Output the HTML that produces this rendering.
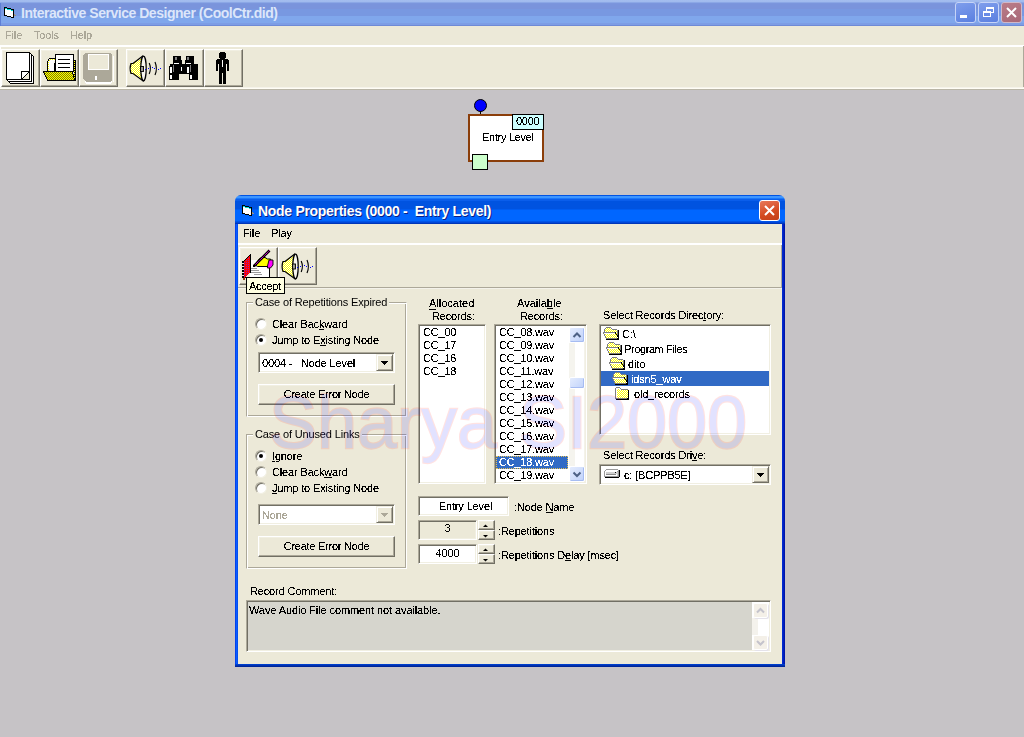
<!DOCTYPE html>
<html><head><meta charset="utf-8">
<style>
*{margin:0;padding:0;box-sizing:border-box}
html,body{width:1024px;height:737px;overflow:hidden;background:#C6C3C6;position:relative;font-family:"Liberation Sans",sans-serif}
.a{position:absolute}
.t{position:absolute;font:11px/11px "Liberation Sans",sans-serif;white-space:nowrap;letter-spacing:-0.15px;color:#000;filter:url(#thr)}
.tb{position:absolute;font:bold 13px/13px "Liberation Sans",sans-serif;white-space:nowrap}
u{text-decoration:none;border-bottom:1px solid currentColor;display:inline-block;line-height:11px;height:11px}
.sunk{position:absolute;border:1px solid;border-color:#ACA899 #FFFFFF #FFFFFF #ACA899;box-shadow:inset 1px 1px #716F64,inset -1px -1px #F1EFE2;background:#fff}
.rais{position:absolute;border:1px solid;border-color:#FFFFFF #716F64 #716F64 #FFFFFF;box-shadow:inset -1px -1px #ACA899,inset 1px 1px #F1EFE2;background:#ECE9D8}
.grp{position:absolute;border:1px solid;border-color:#ACA899 #FFFFFF #FFFFFF #ACA899;box-shadow:inset 1px 1px #FFFFFF,inset -1px -1px #ACA899}
.radio{position:absolute;width:12px;height:12px;border-radius:50%;background:#fff;border:1px solid;border-color:#ACA899 #F1EFE2 #F1EFE2 #ACA899;box-shadow:inset 1px 1px #716F64}
.radio.on::after{content:"";position:absolute;left:3px;top:3px;width:4px;height:4px;border-radius:50%;background:#000}
.cbtn{position:absolute;border:1px solid;border-color:#F1EFE2 #716F64 #716F64 #F1EFE2;box-shadow:inset 1px 1px #FFFFFF,inset -1px -1px #ACA899;background:#ECE9D8}
.ls{letter-spacing:-0.2px}
.tbtn{position:absolute;width:39px;height:38px;border:1px solid;border-color:#FFFFFF #716F64 #716F64 #FFFFFF;box-shadow:inset -1px -1px #ACA899,inset 1px 1px #F1EFE2;background:#ECE9D8}
</style></head><body>
<svg width="0" height="0" style="position:absolute"><filter id="thr" color-interpolation-filters="sRGB"><feComponentTransfer><feFuncA type="discrete" tableValues="0 0 0 0 0 0 0 0 0 0 0 0 0 0 0 0 0 0 0 0 0 0 0 0 0 0 0 0 0 0 0 0 0 0 0 0 0 0 0 0 0 0 0 1 1 1 1 1 1 1 1 1 1 1 1 1 1 1 1 1 1 1 1 1 1 1 1 1 1 1 1 1 1 1 1 1 1 1 1 1 1 1 1 1 1 1 1 1 1 1 1 1 1 1 1 1 1 1 1 1"/></feComponentTransfer></filter></svg>

<!-- main title bar -->
<div class="a" style="left:0;top:0;width:1024px;height:26px;background:linear-gradient(180deg,#A3BDEF 0,#A0BAEE 2px,#8CA8E6 2px,#8CA8E6 3px,#7D98DE 3px,#7A94DC 4px,#7A94DC 9px,#7898E1 9px,#7898E1 16px,#80A7EC 16px,#80A7EC 23px,#7D9DE5 23px,#7D9DE5 25px,#6E8AD6 25px,#6E8AD6 26px)"></div>
<div class="a" style="left:0;top:3px;width:1px;height:23px;background:#5E7FD6"></div>
<svg class="a" style="left:4px;top:7px" width="12" height="11" shape-rendering="crispEdges"><rect x="0" y="0" width="3" height="1" fill="#000"/><rect x="0" y="1" width="1" height="1" fill="#000"/><rect x="1" y="1" width="2" height="1" fill="#00E0E0"/><rect x="3" y="1" width="4" height="1" fill="#000"/><rect x="0" y="2" width="1" height="1" fill="#000"/><rect x="1" y="2" width="2" height="1" fill="#fff"/><rect x="3" y="2" width="4" height="1" fill="#00E0E0"/><rect x="7" y="2" width="3" height="1" fill="#000"/><rect x="0" y="3" width="1" height="1" fill="#000"/><rect x="1" y="3" width="6" height="1" fill="#fff"/><rect x="7" y="3" width="2" height="1" fill="#00E0E0"/><rect x="9" y="3" width="1" height="1" fill="#000"/><rect x="0" y="4" width="1" height="1" fill="#000"/><rect x="1" y="4" width="8" height="1" fill="#fff"/><rect x="9" y="4" width="1" height="1" fill="#000"/><rect x="0" y="5" width="1" height="1" fill="#000"/><rect x="1" y="5" width="8" height="1" fill="#fff"/><rect x="9" y="5" width="1" height="1" fill="#000"/><rect x="0" y="6" width="1" height="1" fill="#000"/><rect x="1" y="6" width="8" height="1" fill="#fff"/><rect x="9" y="6" width="1" height="1" fill="#000"/><rect x="0" y="7" width="1" height="1" fill="#000"/><rect x="1" y="7" width="8" height="1" fill="#fff"/><rect x="9" y="7" width="1" height="1" fill="#000"/><rect x="10" y="7" width="1" height="1" fill="#9C9080"/><rect x="0" y="8" width="3" height="1" fill="#000"/><rect x="3" y="8" width="6" height="1" fill="#fff"/><rect x="9" y="8" width="1" height="1" fill="#000"/><rect x="10" y="8" width="2" height="1" fill="#9C9080"/><rect x="3" y="9" width="4" height="1" fill="#000"/><rect x="7" y="9" width="2" height="1" fill="#fff"/><rect x="9" y="9" width="1" height="1" fill="#000"/><rect x="7" y="10" width="3" height="1" fill="#000"/></svg>
<div class="tb" style="left:21px;top:6px;color:#DCE6FA;font-size:14px;line-height:14px;letter-spacing:-0.47px">Interactive Service Designer (CoolCtr.did)</div>
<!-- title buttons -->
<div class="a" style="left:955px;top:2px;width:21px;height:21px;border-radius:3px;border:1px solid #C6D4F7;background:linear-gradient(160deg,#7F9EEC,#5A7FE0)"></div>
<div class="a" style="left:960px;top:15px;width:7px;height:3px;background:#fff"></div>
<div class="a" style="left:978px;top:2px;width:21px;height:21px;border-radius:3px;border:1px solid #C6D4F7;background:linear-gradient(160deg,#7F9EEC,#5A7FE0)"></div>
<div class="a" style="left:986px;top:7px;width:8px;height:6px;border:1px solid #fff;border-top-width:2px"></div>
<div class="a" style="left:983px;top:11px;width:8px;height:6px;border:1px solid #fff;border-top-width:2px;background:#6A8CE6"></div>
<div class="a" style="left:1001px;top:2px;width:21px;height:21px;border-radius:3px;border:1px solid #D0B8C8;background:linear-gradient(160deg,#BA7C88,#A86878)"></div>
<svg class="a" style="left:1001px;top:2px" width="21" height="21"><path d="M6 6 L15 15 M15 6 L6 15" stroke="#fff" stroke-width="2"/></svg>

<!-- main menu -->
<div class="a" style="left:0;top:26px;width:1024px;height:19px;background:#ECE9D8"></div>
<div class="t" style="left:5px;top:30px;color:#ACA899">File</div>
<div class="t" style="left:34px;top:30px;color:#ACA899">Tools</div>
<div class="t" style="left:70px;top:30px;color:#ACA899">Help</div>

<!-- main toolbar band -->
<div class="a" style="left:0;top:45px;width:1024px;height:45px;background:#ECE9D8;border-top:2px solid #fff;border-left:1px solid #fff"></div>
<div class="a" style="left:1023px;top:46px;width:1px;height:43px;background:#ACA899"></div>
<div class="a" style="left:0;top:87px;width:1024px;height:1px;background:#F5F3EA"></div>
<div class="a" style="left:0;top:88px;width:1024px;height:1px;background:#FFFDF5"></div>
<div class="a" style="left:0;top:89px;width:1024px;height:1px;background:#B9B5A6"></div>

<div class="tbtn" style="left:1px;top:49px"></div>
<div class="tbtn" style="left:40px;top:49px"></div>
<div class="tbtn" style="left:79px;top:49px"></div>
<div class="tbtn" style="left:126px;top:49px"></div>
<div class="tbtn" style="left:165px;top:49px"></div>
<div class="tbtn" style="left:204px;top:49px"></div>


<!-- main toolbar icons -->
<svg class="a" style="left:0;top:0" width="250" height="90" shape-rendering="crispEdges">
 <defs>
  <pattern id="dy" width="2" height="2" patternUnits="userSpaceOnUse"><rect width="2" height="2" fill="#FFFF00"/><rect width="1" height="1" fill="#808000"/><rect x="1" y="1" width="1" height="1" fill="#808000"/></pattern>
  <pattern id="dw" width="2" height="2" patternUnits="userSpaceOnUse"><rect width="2" height="2" fill="#FFFF00"/><rect width="1" height="1" fill="#fff"/><rect x="1" y="1" width="1" height="1" fill="#fff"/></pattern>
 </defs>
 <!-- new doc -->
 <g fill="none" stroke="#000" stroke-width="1">
  <path d="M6.5 52.5 H29.5 L33.5 56.5 V83.5 H10.5 L6.5 79.5 Z" fill="#fff"/>
  <path d="M29.5 52.5 L31.5 54.5 V81.5 H8.5 L6.5 79.5"/>
  <rect x="6.5" y="52.5" width="23" height="27" fill="#fff"/>
  <path d="M29 72 V79 H22 Z" fill="#ECE9D8" stroke="none"/>
  <path d="M21.5 79.5 V71.5 H29.5"/>
  <path d="M28.5 72.5 L21.5 79.5"/>
 </g>
 <!-- open folder -->
 <g stroke="#000" stroke-width="1" fill="none">
  <path d="M47.5 71.5 V61.5 L49.5 58.5 H56.5" fill="#fff"/>
  <path d="M48.5 71 V62 L50 59.5 H55" stroke="#FFFF00" stroke-dasharray="1 1"/>
  <rect x="50" y="63" width="4" height="8" fill="#fff" stroke="none"/>
  <rect x="54" y="63" width="1" height="9" fill="#000" stroke="none"/>
  <rect x="55.5" y="54.5" width="18" height="17" fill="#fff"/>
  <rect x="58" y="59" width="12" height="1" fill="#000" stroke="none"/>
  <rect x="58" y="63" width="12" height="1" fill="#000" stroke="none"/>
  <rect x="58" y="67" width="12" height="1" fill="#000" stroke="none"/>
  <rect x="74" y="60" width="2" height="21" fill="#000" stroke="none"/>
  <path d="M74.5 61 V79" stroke="#FFFF00" stroke-dasharray="1 1"/>
  <path d="M43.5 71.5 H72.5 L74.5 80.5 H47.5 Z" fill="url(#dy)"/>
 </g>
 <!-- save (disabled) -->
 <path d="M85 55 H112 V83 H85 Z" fill="#fff"/>
 <path d="M83 55 L85 53 H110 L112 55 V80 L110 82 H86 L83 79 Z" fill="#ACA899"/>
 <rect x="113" y="56" width="1" height="26" fill="#fff"/>
 <rect x="86" y="83" width="25" height="1" fill="#fff"/>
 <rect x="88" y="54" width="21" height="16" fill="#fff"/>
 <rect x="89" y="55" width="19" height="14" fill="#ECE9D8"/>
 <rect x="95" y="76" width="2" height="4" fill="#fff"/>
 <!-- speaker -->
 <g id="spk">
  <path d="M133 63.5 L142.5 56.2 L143 80.8 L133 73.5 H131 Q129.2 68.5 131 63.5 Z" fill="url(#dw)" stroke="#000" stroke-width="1.2" shape-rendering="auto"/>
  <ellipse cx="143.5" cy="68.5" rx="2.7" ry="12.3" fill="#F8F6EE" stroke="#000" stroke-width="1.25" shape-rendering="auto"/>
  <rect x="140.5" y="66" width="3" height="5" fill="#9C9A94" stroke="#000" stroke-width="0.9"/>
  <path d="M149.2 63 Q151.6 68.5 149.2 74" fill="none" stroke="#000" stroke-width="1.15" shape-rendering="auto"/>
  <path d="M155 62 Q157.8 68.5 155 75" fill="none" stroke="#000" stroke-width="1.15" shape-rendering="auto"/>
  <g fill="#0000FF"><rect x="145" y="69" width="1" height="1"/><rect x="148" y="68" width="1" height="1"/><rect x="152" y="67" width="1" height="1"/><rect x="154" y="68" width="1" height="1"/><rect x="158" y="69" width="1" height="1"/><rect x="160" y="68" width="1" height="1"/></g>
 </g>
 <!-- binoculars -->
 <g fill="#000">
  <rect x="173" y="56" width="8" height="4"/><rect x="186" y="56" width="8" height="4"/>
  <rect x="173" y="60" width="9" height="4"/><rect x="185" y="60" width="9" height="4"/>
  <rect x="170" y="64" width="28" height="2"/><rect x="169" y="66" width="29" height="8"/>
  <rect x="169" y="74" width="10" height="6"/><rect x="189" y="74" width="9" height="6"/>
 </g>
 <g fill="#fff">
  <rect x="174" y="63" width="5" height="1"/><rect x="186" y="63" width="5" height="1"/>
  <rect x="170" y="67" width="2" height="6"/><rect x="170" y="75" width="2" height="4"/>
  <rect x="181" y="67" width="1" height="4"/>
  <rect x="187" y="67" width="2" height="6"/><rect x="190" y="75" width="2" height="4"/>
 </g>
 <g fill="#808080">
  <rect x="175" y="57" width="2" height="3"/><rect x="187" y="57" width="2" height="3"/>
  <rect x="173" y="65" width="1" height="7"/><rect x="190" y="65" width="1" height="7"/>
 </g>
 <!-- person -->
 <g fill="#000">
  <rect x="220" y="52" width="5" height="7"/>
  <rect x="219" y="53" width="7" height="5"/>
  <rect x="217" y="59" width="11" height="1"/>
  <rect x="216" y="60" width="13" height="4"/>
  <rect x="216" y="64" width="2" height="7"/>
  <rect x="227" y="64" width="2" height="7"/>
  <rect x="219" y="64" width="7" height="5"/>
  <rect x="219" y="68" width="3" height="16"/>
  <rect x="223" y="68" width="3" height="16"/>
  <rect x="222" y="68" width="1" height="5"/>
 </g>
 <rect x="222" y="60" width="1" height="7" fill="#fff"/>
 <rect x="218" y="64" width="1" height="7" fill="#F4F2E8"/>
 <rect x="226" y="64" width="1" height="7" fill="#F4F2E8"/>
</svg>

<!-- diagram node -->
<div class="a" style="left:474px;top:99px;width:13px;height:13px;border-radius:50%;background:#0000FF;border:1px solid #000"></div>
<div class="a" style="left:480px;top:111px;width:1px;height:3px;background:#000"></div>
<div class="a" style="left:468px;top:114px;width:76px;height:48px;background:#fff;border:2px solid #8B3E0A"></div>
<div class="a" style="left:512px;top:114px;width:32px;height:16px;background:#CCFFFF;border:1px solid #000"></div>
<div class="t" style="left:516px;top:116px;letter-spacing:-0.3px">0000</div>
<div class="t" style="left:482px;top:132px;letter-spacing:-0.3px">Entry Level</div>
<div class="a" style="left:472px;top:154px;width:16px;height:16px;background:#CCFFCC;border:1px solid #000"></div>

<!-- DIALOG -->
<div id="dlg" class="a" style="left:235px;top:195px;width:550px;height:472px">
 <div class="a" style="left:0;top:0;width:550px;height:29px;border-radius:6px 6px 0 0;background:linear-gradient(180deg,#0054E3 0,#0054E3 1px,#3D95FF 1px,#3D95FF 3px,#1A78FA 3px,#1A78FA 4px,#0A5EEB 4px,#0A5EEB 6px,#0053E0 6px,#0053E0 14px,#005CF0 14px,#005CF0 15px,#0066FF 15px,#0066FF 26px,#0062F8 26px,#0046D8 27px,#0046D8 28px,#0036B8 28px)"></div>
 <div class="a" style="left:0;top:29px;width:3px;height:443px;background:linear-gradient(90deg,#0034E0,#0A5CFF,#0046E8)"></div>
 <div class="a" style="left:547px;top:29px;width:3px;height:443px;background:linear-gradient(90deg,#0030D8,#0020C0,#0010A0)"></div>
 <div class="a" style="left:0;top:469px;width:550px;height:3px;background:linear-gradient(180deg,#0046D8,#0030B0,#00208C)"></div>
</div>

<!-- dialog content -->
<div class="a" style="left:238px;top:224px;width:544px;height:440px;background:#ECE9D8"></div>
<div class="t" style="left:243px;top:228px">File</div>
<div class="t" style="left:271px;top:228px">Play</div>
<div class="a" style="left:238px;top:243px;width:544px;height:2px;background:#fff"></div>
<div class="a" style="left:781px;top:245px;width:1px;height:42px;background:#ACA899"></div>
<div class="a" style="left:238px;top:287px;width:544px;height:1px;background:#ACA899"></div>
<div class="a" style="left:238px;top:288px;width:544px;height:1px;background:#F4F2EA"></div>
<div class="tbtn" style="left:239px;top:247px"></div>
<div class="tbtn" style="left:278px;top:247px"></div>

<!-- group 1 -->
<div class="grp" style="left:246px;top:302px;width:161px;height:115px"></div>
<div class="t" style="left:253px;top:297px;background:#ECE9D8;padding:0 2px">Case of Repetitions Expired</div>
<div class="radio" style="left:255px;top:318px"></div>
<div class="t" style="left:272px;top:319px">Clear Bac<u>k</u>ward</div>
<div class="radio on" style="left:255px;top:334px"></div>
<div class="t" style="left:272px;top:335px">Jump to E<u>x</u>isting Node</div>
<div class="sunk" style="left:258px;top:352px;width:137px;height:21px"></div>
<div class="t" style="left:262px;top:358px">0004 -&nbsp;&nbsp; Node Level</div>
<div class="cbtn" style="left:376px;top:354px;width:17px;height:17px"></div>
<svg class="a" style="left:381px;top:361px" width="7" height="4" shape-rendering="crispEdges" fill="#000"><rect x="0" y="0" width="7" height="1"/><rect x="1" y="1" width="5" height="1"/><rect x="2" y="2" width="3" height="1"/><rect x="3" y="3" width="1" height="1"/></svg>
<div class="rais" style="left:258px;top:384px;width:137px;height:21px"></div>
<div class="t" style="left:258px;top:389px;width:137px;text-align:center;letter-spacing:-0.25px">Create Error Node</div>

<!-- group 2 -->
<div class="grp" style="left:246px;top:434px;width:161px;height:135px"></div>
<div class="t" style="left:253px;top:429px;background:#ECE9D8;padding:0 2px">Case of Unused Links</div>
<div class="radio on" style="left:255px;top:450px"></div>
<div class="t" style="left:272px;top:451px"><u>I</u>gnore</div>
<div class="radio" style="left:255px;top:466px"></div>
<div class="t" style="left:272px;top:467px">Clear Back<u>w</u>ard</div>
<div class="radio" style="left:255px;top:482px"></div>
<div class="t" style="left:272px;top:483px"><u>J</u>ump to Existing Node</div>
<div class="sunk" style="left:258px;top:504px;width:137px;height:21px"></div>
<div class="t" style="left:262px;top:510px;color:#ACA899">None</div>
<div class="cbtn" style="left:376px;top:506px;width:17px;height:17px"></div>
<svg class="a" style="left:381px;top:513px" width="7" height="4" shape-rendering="crispEdges" fill="#ACA899"><rect x="0" y="0" width="7" height="1"/><rect x="1" y="1" width="5" height="1"/><rect x="2" y="2" width="3" height="1"/><rect x="3" y="3" width="1" height="1"/></svg>
<div class="rais" style="left:258px;top:536px;width:137px;height:21px"></div>
<div class="t" style="left:258px;top:541px;width:137px;text-align:center;letter-spacing:-0.25px">Create Error Node</div>

<!-- lists -->
<div class="t" style="left:429px;top:298px;letter-spacing:0">A<span style="position:absolute;left:0;top:11px;width:7px;height:1px;background:#000"></span>llocated</div>
<div class="t" style="left:432px;top:311px">Records:</div>
<div class="t" style="left:517px;top:298px;letter-spacing:0">Availa<u>b</u>le</div>
<div class="t" style="left:520px;top:311px">Records:</div>
<div class="sunk" style="left:418px;top:324px;width:68px;height:160px"></div>
<div class="t ls" style="left:423px;top:327px">CC_00</div><div class="t ls" style="left:423px;top:340px">CC_17</div><div class="t ls" style="left:423px;top:353px">CC_16</div><div class="t ls" style="left:423px;top:366px">CC_18</div>
<div class="sunk" style="left:494px;top:324px;width:93px;height:160px"></div>
<div class="a" style="left:496px;top:456px;width:72px;height:13px;background:#316AC5;outline:1px dotted #E8C050;outline-offset:-1px"></div>
<div class="t ls" style="left:499px;top:327px">CC_08.wav</div><div class="t ls" style="left:499px;top:340px">CC_09.wav</div><div class="t ls" style="left:499px;top:353px">CC_10.wav</div><div class="t ls" style="left:499px;top:366px">CC_11.wav</div><div class="t ls" style="left:499px;top:379px">CC_12.wav</div><div class="t ls" style="left:499px;top:392px">CC_13.wav</div><div class="t ls" style="left:499px;top:405px">CC_14.wav</div><div class="t ls" style="left:499px;top:418px">CC_15.wav</div><div class="t ls" style="left:499px;top:431px">CC_16.wav</div><div class="t ls" style="left:499px;top:444px">CC_17.wav</div><div class="t ls" style="left:499px;top:457px;color:#fff">CC_18.wav</div><div class="t ls" style="left:499px;top:470px">CC_19.wav</div>
<!-- scrollbar -->
<div class="a" style="left:569px;top:326px;width:16px;height:156px;background:#FFFFFF"></div>
<div class="a" style="left:569px;top:343px;width:6px;height:123px;background:#F5F4EE"></div>
<div class="a" style="left:584px;top:326px;width:1px;height:156px;background:#F4F2EA"></div>
<div class="a" style="left:569px;top:327px;width:16px;height:16px;border-radius:2px;background:linear-gradient(135deg,#E4ECFE,#C0D2FA);border:1px solid #fff;box-shadow:inset -1px -1px #A6BCF2"></div>
<svg class="a" style="left:569px;top:327px" width="16" height="16"><path d="M4.5 10 L8 6.5 L11.5 10" fill="none" stroke="#4D6185" stroke-width="2"/></svg>
<div class="a" style="left:569px;top:377px;width:16px;height:12px;border-radius:2px;background:linear-gradient(135deg,#E4ECFE,#C0D2FA);border:1px solid #fff;box-shadow:inset -1px -1px #A6BCF2"></div>
<div class="a" style="left:569px;top:466px;width:16px;height:16px;border-radius:2px;background:linear-gradient(135deg,#E4ECFE,#C0D2FA);border:1px solid #fff;box-shadow:inset -1px -1px #A6BCF2"></div>
<svg class="a" style="left:569px;top:466px" width="16" height="16"><path d="M4.5 6.5 L8 10 L11.5 6.5" fill="none" stroke="#4D6185" stroke-width="2"/></svg>

<!-- directory tree -->
<div class="t" style="left:603px;top:310px">Select Records Direc<u>t</u>ory:</div>
<div class="sunk" style="left:599px;top:324px;width:172px;height:111px"></div>
<div class="a" style="left:601px;top:371px;width:168px;height:15px;background:#316AC5"></div>
<svg class="a" style="left:0;top:0" width="780" height="500" shape-rendering="crispEdges">
 <defs>
  <pattern id="dyw" width="2" height="2" patternUnits="userSpaceOnUse"><rect width="2" height="2" fill="#FFFF00"/><rect width="1" height="1" fill="#fff"/><rect x="1" y="1" width="1" height="1" fill="#fff"/></pattern>
  <g id="fopen">
   <path d="M1.5 7.5 V2.5 L3.5 0.5 H7.5 L9.5 2.5 H13.5 V11.5 H4.5 Z" fill="url(#dyw)" stroke="#808080"/>
   <path d="M0.5 7.5 H11.5 L13.5 11.5 H3.5 Z" fill="url(#dyw)" stroke="#808080"/>
   <path d="M0.5 7.5 H11.5" stroke="#fff"/>
   <path d="M11.5 7.5 L13.5 11.5" stroke="#000"/>
   <rect x="14" y="3" width="1" height="10" fill="#000"/>
   <rect x="4" y="12" width="11" height="1" fill="#000"/>
  </g>
  <g id="fclosed">
   <path d="M0.5 11.5 V1.5 L1.5 0.5 H5.5 L7.5 2.5 H12.5 V11.5 Z" fill="url(#dyw)" stroke="#808080"/>
   <rect x="13" y="2" width="1" height="11" fill="#000"/>
   <rect x="1" y="12" width="13" height="1" fill="#000"/>
  </g>
 </defs>
<rect x="606" y="327" width="5" height="1" fill="#808080"/><rect x="605" y="328" width="1" height="1" fill="#808080"/><rect x="606" y="328" width="5" height="1" fill="url(#dyw)"/><rect x="611" y="328" width="1" height="1" fill="#808080"/><rect x="604" y="329" width="1" height="1" fill="#808080"/><rect x="605" y="329" width="7" height="1" fill="url(#dyw)"/><rect x="612" y="329" width="5" height="1" fill="#808080"/><rect x="604" y="330" width="1" height="1" fill="#808080"/><rect x="605" y="330" width="12" height="1" fill="url(#dyw)"/><rect x="617" y="330" width="1" height="1" fill="#808080"/><rect x="618" y="330" width="1" height="1" fill="#000"/><rect x="604" y="331" width="1" height="1" fill="#808080"/><rect x="605" y="331" width="12" height="1" fill="url(#dyw)"/><rect x="617" y="331" width="1" height="1" fill="#808080"/><rect x="618" y="331" width="1" height="1" fill="#000"/><rect x="603" y="332" width="12" height="1" fill="#808080"/><rect x="615" y="332" width="1" height="1" fill="#000"/><rect x="616" y="332" width="1" height="1" fill="url(#dyw)"/><rect x="617" y="332" width="1" height="1" fill="#808080"/><rect x="618" y="332" width="1" height="1" fill="#000"/><rect x="603" y="333" width="1" height="1" fill="#808080"/><rect x="604" y="333" width="11" height="1" fill="#fff"/><rect x="615" y="333" width="1" height="1" fill="#000"/><rect x="616" y="333" width="1" height="1" fill="url(#dyw)"/><rect x="617" y="333" width="1" height="1" fill="#808080"/><rect x="618" y="333" width="1" height="1" fill="#000"/><rect x="604" y="334" width="1" height="1" fill="#808080"/><rect x="605" y="334" width="11" height="1" fill="url(#dyw)"/><rect x="616" y="334" width="1" height="1" fill="#000"/><rect x="617" y="334" width="1" height="1" fill="#808080"/><rect x="618" y="334" width="1" height="1" fill="#000"/><rect x="604" y="335" width="1" height="1" fill="#808080"/><rect x="605" y="335" width="12" height="1" fill="url(#dyw)"/><rect x="617" y="335" width="2" height="1" fill="#000"/><rect x="605" y="336" width="1" height="1" fill="#808080"/><rect x="606" y="336" width="11" height="1" fill="url(#dyw)"/><rect x="617" y="336" width="2" height="1" fill="#000"/><rect x="605" y="337" width="1" height="1" fill="#808080"/><rect x="606" y="337" width="12" height="1" fill="url(#dyw)"/><rect x="618" y="337" width="1" height="1" fill="#000"/><rect x="606" y="338" width="11" height="1" fill="#808080"/><rect x="617" y="338" width="2" height="1" fill="#000"/><rect x="606" y="339" width="13" height="1" fill="#000"/><rect x="609" y="342" width="5" height="1" fill="#808080"/><rect x="608" y="343" width="1" height="1" fill="#808080"/><rect x="609" y="343" width="5" height="1" fill="url(#dyw)"/><rect x="614" y="343" width="1" height="1" fill="#808080"/><rect x="607" y="344" width="1" height="1" fill="#808080"/><rect x="608" y="344" width="7" height="1" fill="url(#dyw)"/><rect x="615" y="344" width="5" height="1" fill="#808080"/><rect x="607" y="345" width="1" height="1" fill="#808080"/><rect x="608" y="345" width="12" height="1" fill="url(#dyw)"/><rect x="620" y="345" width="1" height="1" fill="#808080"/><rect x="621" y="345" width="1" height="1" fill="#000"/><rect x="607" y="346" width="1" height="1" fill="#808080"/><rect x="608" y="346" width="12" height="1" fill="url(#dyw)"/><rect x="620" y="346" width="1" height="1" fill="#808080"/><rect x="621" y="346" width="1" height="1" fill="#000"/><rect x="606" y="347" width="12" height="1" fill="#808080"/><rect x="618" y="347" width="1" height="1" fill="#000"/><rect x="619" y="347" width="1" height="1" fill="url(#dyw)"/><rect x="620" y="347" width="1" height="1" fill="#808080"/><rect x="621" y="347" width="1" height="1" fill="#000"/><rect x="606" y="348" width="1" height="1" fill="#808080"/><rect x="607" y="348" width="11" height="1" fill="#fff"/><rect x="618" y="348" width="1" height="1" fill="#000"/><rect x="619" y="348" width="1" height="1" fill="url(#dyw)"/><rect x="620" y="348" width="1" height="1" fill="#808080"/><rect x="621" y="348" width="1" height="1" fill="#000"/><rect x="607" y="349" width="1" height="1" fill="#808080"/><rect x="608" y="349" width="11" height="1" fill="url(#dyw)"/><rect x="619" y="349" width="1" height="1" fill="#000"/><rect x="620" y="349" width="1" height="1" fill="#808080"/><rect x="621" y="349" width="1" height="1" fill="#000"/><rect x="607" y="350" width="1" height="1" fill="#808080"/><rect x="608" y="350" width="12" height="1" fill="url(#dyw)"/><rect x="620" y="350" width="2" height="1" fill="#000"/><rect x="608" y="351" width="1" height="1" fill="#808080"/><rect x="609" y="351" width="11" height="1" fill="url(#dyw)"/><rect x="620" y="351" width="2" height="1" fill="#000"/><rect x="608" y="352" width="1" height="1" fill="#808080"/><rect x="609" y="352" width="12" height="1" fill="url(#dyw)"/><rect x="621" y="352" width="1" height="1" fill="#000"/><rect x="609" y="353" width="11" height="1" fill="#808080"/><rect x="620" y="353" width="2" height="1" fill="#000"/><rect x="609" y="354" width="13" height="1" fill="#000"/><rect x="612" y="357" width="5" height="1" fill="#808080"/><rect x="611" y="358" width="1" height="1" fill="#808080"/><rect x="612" y="358" width="5" height="1" fill="url(#dyw)"/><rect x="617" y="358" width="1" height="1" fill="#808080"/><rect x="610" y="359" width="1" height="1" fill="#808080"/><rect x="611" y="359" width="7" height="1" fill="url(#dyw)"/><rect x="618" y="359" width="5" height="1" fill="#808080"/><rect x="610" y="360" width="1" height="1" fill="#808080"/><rect x="611" y="360" width="12" height="1" fill="url(#dyw)"/><rect x="623" y="360" width="1" height="1" fill="#808080"/><rect x="624" y="360" width="1" height="1" fill="#000"/><rect x="610" y="361" width="1" height="1" fill="#808080"/><rect x="611" y="361" width="12" height="1" fill="url(#dyw)"/><rect x="623" y="361" width="1" height="1" fill="#808080"/><rect x="624" y="361" width="1" height="1" fill="#000"/><rect x="609" y="362" width="12" height="1" fill="#808080"/><rect x="621" y="362" width="1" height="1" fill="#000"/><rect x="622" y="362" width="1" height="1" fill="url(#dyw)"/><rect x="623" y="362" width="1" height="1" fill="#808080"/><rect x="624" y="362" width="1" height="1" fill="#000"/><rect x="609" y="363" width="1" height="1" fill="#808080"/><rect x="610" y="363" width="11" height="1" fill="#fff"/><rect x="621" y="363" width="1" height="1" fill="#000"/><rect x="622" y="363" width="1" height="1" fill="url(#dyw)"/><rect x="623" y="363" width="1" height="1" fill="#808080"/><rect x="624" y="363" width="1" height="1" fill="#000"/><rect x="610" y="364" width="1" height="1" fill="#808080"/><rect x="611" y="364" width="11" height="1" fill="url(#dyw)"/><rect x="622" y="364" width="1" height="1" fill="#000"/><rect x="623" y="364" width="1" height="1" fill="#808080"/><rect x="624" y="364" width="1" height="1" fill="#000"/><rect x="610" y="365" width="1" height="1" fill="#808080"/><rect x="611" y="365" width="12" height="1" fill="url(#dyw)"/><rect x="623" y="365" width="2" height="1" fill="#000"/><rect x="611" y="366" width="1" height="1" fill="#808080"/><rect x="612" y="366" width="11" height="1" fill="url(#dyw)"/><rect x="623" y="366" width="2" height="1" fill="#000"/><rect x="611" y="367" width="1" height="1" fill="#808080"/><rect x="612" y="367" width="12" height="1" fill="url(#dyw)"/><rect x="624" y="367" width="1" height="1" fill="#000"/><rect x="612" y="368" width="11" height="1" fill="#808080"/><rect x="623" y="368" width="2" height="1" fill="#000"/><rect x="612" y="369" width="13" height="1" fill="#000"/><rect x="615" y="372" width="5" height="1" fill="#808080"/><rect x="614" y="373" width="1" height="1" fill="#808080"/><rect x="615" y="373" width="5" height="1" fill="url(#dyw)"/><rect x="620" y="373" width="1" height="1" fill="#808080"/><rect x="613" y="374" width="1" height="1" fill="#808080"/><rect x="614" y="374" width="7" height="1" fill="url(#dyw)"/><rect x="621" y="374" width="5" height="1" fill="#808080"/><rect x="613" y="375" width="1" height="1" fill="#808080"/><rect x="614" y="375" width="12" height="1" fill="url(#dyw)"/><rect x="626" y="375" width="1" height="1" fill="#808080"/><rect x="627" y="375" width="1" height="1" fill="#000"/><rect x="613" y="376" width="1" height="1" fill="#808080"/><rect x="614" y="376" width="12" height="1" fill="url(#dyw)"/><rect x="626" y="376" width="1" height="1" fill="#808080"/><rect x="627" y="376" width="1" height="1" fill="#000"/><rect x="612" y="377" width="12" height="1" fill="#808080"/><rect x="624" y="377" width="1" height="1" fill="#000"/><rect x="625" y="377" width="1" height="1" fill="url(#dyw)"/><rect x="626" y="377" width="1" height="1" fill="#808080"/><rect x="627" y="377" width="1" height="1" fill="#000"/><rect x="612" y="378" width="1" height="1" fill="#808080"/><rect x="613" y="378" width="11" height="1" fill="#fff"/><rect x="624" y="378" width="1" height="1" fill="#000"/><rect x="625" y="378" width="1" height="1" fill="url(#dyw)"/><rect x="626" y="378" width="1" height="1" fill="#808080"/><rect x="627" y="378" width="1" height="1" fill="#000"/><rect x="613" y="379" width="1" height="1" fill="#808080"/><rect x="614" y="379" width="11" height="1" fill="url(#dyw)"/><rect x="625" y="379" width="1" height="1" fill="#000"/><rect x="626" y="379" width="1" height="1" fill="#808080"/><rect x="627" y="379" width="1" height="1" fill="#000"/><rect x="613" y="380" width="1" height="1" fill="#808080"/><rect x="614" y="380" width="12" height="1" fill="url(#dyw)"/><rect x="626" y="380" width="2" height="1" fill="#000"/><rect x="614" y="381" width="1" height="1" fill="#808080"/><rect x="615" y="381" width="11" height="1" fill="url(#dyw)"/><rect x="626" y="381" width="2" height="1" fill="#000"/><rect x="614" y="382" width="1" height="1" fill="#808080"/><rect x="615" y="382" width="12" height="1" fill="url(#dyw)"/><rect x="627" y="382" width="1" height="1" fill="#000"/><rect x="615" y="383" width="11" height="1" fill="#808080"/><rect x="626" y="383" width="2" height="1" fill="#000"/><rect x="615" y="384" width="13" height="1" fill="#000"/><rect x="616" y="387" width="4" height="1" fill="#808080"/><rect x="615" y="388" width="1" height="1" fill="#808080"/><rect x="616" y="388" width="4" height="1" fill="#fff"/><rect x="620" y="388" width="1" height="1" fill="#808080"/><rect x="615" y="389" width="1" height="1" fill="#808080"/><rect x="616" y="389" width="1" height="1" fill="#fff"/><rect x="617" y="389" width="3" height="1" fill="url(#dyw)"/><rect x="620" y="389" width="1" height="1" fill="#fff"/><rect x="621" y="389" width="7" height="1" fill="#808080"/><rect x="615" y="390" width="1" height="1" fill="#808080"/><rect x="616" y="390" width="1" height="1" fill="#fff"/><rect x="617" y="390" width="11" height="1" fill="url(#dyw)"/><rect x="628" y="390" width="1" height="1" fill="#000"/><rect x="615" y="391" width="1" height="1" fill="#808080"/><rect x="616" y="391" width="1" height="1" fill="#fff"/><rect x="617" y="391" width="11" height="1" fill="url(#dyw)"/><rect x="628" y="391" width="1" height="1" fill="#000"/><rect x="615" y="392" width="1" height="1" fill="#808080"/><rect x="616" y="392" width="1" height="1" fill="#fff"/><rect x="617" y="392" width="11" height="1" fill="url(#dyw)"/><rect x="628" y="392" width="1" height="1" fill="#000"/><rect x="615" y="393" width="1" height="1" fill="#808080"/><rect x="616" y="393" width="1" height="1" fill="#fff"/><rect x="617" y="393" width="11" height="1" fill="url(#dyw)"/><rect x="628" y="393" width="1" height="1" fill="#000"/><rect x="615" y="394" width="1" height="1" fill="#808080"/><rect x="616" y="394" width="1" height="1" fill="#fff"/><rect x="617" y="394" width="11" height="1" fill="url(#dyw)"/><rect x="628" y="394" width="1" height="1" fill="#000"/><rect x="615" y="395" width="1" height="1" fill="#808080"/><rect x="616" y="395" width="1" height="1" fill="#fff"/><rect x="617" y="395" width="11" height="1" fill="url(#dyw)"/><rect x="628" y="395" width="1" height="1" fill="#000"/><rect x="615" y="396" width="1" height="1" fill="#808080"/><rect x="616" y="396" width="1" height="1" fill="#fff"/><rect x="617" y="396" width="11" height="1" fill="url(#dyw)"/><rect x="628" y="396" width="1" height="1" fill="#000"/><rect x="615" y="397" width="1" height="1" fill="#808080"/><rect x="616" y="397" width="1" height="1" fill="#fff"/><rect x="617" y="397" width="11" height="1" fill="url(#dyw)"/><rect x="628" y="397" width="1" height="1" fill="#000"/><rect x="615" y="398" width="12" height="1" fill="#808080"/><rect x="627" y="398" width="2" height="1" fill="#000"/><rect x="616" y="399" width="13" height="1" fill="#000"/>
</svg>
<div class="t" style="left:622px;top:329px">C:\</div>
<div class="t" style="left:624px;top:344px;letter-spacing:-0.4px">Program Files</div>
<div class="t" style="left:628px;top:359px">dito</div>
<div class="t" style="left:631px;top:374px;color:#fff">idsn5_wav</div>
<div class="t" style="left:634px;top:389px">old_records</div>

<div class="t" style="left:603px;top:450px">Select Records Dri<u>v</u>e:</div>
<div class="sunk" style="left:599px;top:464px;width:172px;height:21px"></div>
<div class="t" style="left:624px;top:470px">c: [BCPPB5E]</div>
<div class="cbtn" style="left:752px;top:466px;width:17px;height:17px"></div>
<svg class="a" style="left:757px;top:473px" width="7" height="4" shape-rendering="crispEdges" fill="#000"><rect x="0" y="0" width="7" height="1"/><rect x="1" y="1" width="5" height="1"/><rect x="2" y="2" width="3" height="1"/><rect x="3" y="3" width="1" height="1"/></svg>

<!-- bottom fields -->
<div class="sunk" style="left:418px;top:496px;width:91px;height:20px"></div>
<div class="t" style="left:420px;top:501px;width:91px;text-align:center">Entry Level</div>
<div class="t" style="left:514px;top:502px">:Node <u>N</u>ame</div>
<div class="sunk" style="left:418px;top:520px;width:59px;height:20px;background:#ECE9D8"></div>
<div class="t" style="left:418px;top:523px;width:59px;text-align:center">3</div>
<div class="rais" style="left:478px;top:520px;width:17px;height:10px"></div>
<div class="rais" style="left:478px;top:530px;width:17px;height:10px"></div>
<div class="t" style="left:498px;top:526px">:Repetitions</div>
<div class="sunk" style="left:418px;top:544px;width:59px;height:20px"></div>
<div class="t" style="left:418px;top:548px;width:59px;text-align:center">4000</div>
<div class="rais" style="left:478px;top:544px;width:17px;height:10px"></div>
<div class="rais" style="left:478px;top:554px;width:17px;height:10px"></div>
<div class="t" style="left:498px;top:550px">:Repetitions D<u>e</u>lay [msec]</div>

<svg class="a" style="left:0;top:0" width="780" height="600"> <!-- drive icon --><rect x="606" y="469" width="12" height="1" fill="#9A9A9A"/><rect x="605" y="470" width="1" height="1" fill="#9A9A9A"/><rect x="606" y="470" width="12" height="1" fill="#fff"/><rect x="618" y="470" width="1" height="1" fill="#9A9A9A"/><rect x="619" y="470" width="1" height="1" fill="#000"/><rect x="604" y="471" width="1" height="1" fill="#9A9A9A"/><rect x="605" y="471" width="12" height="1" fill="#fff"/><rect x="617" y="471" width="2" height="1" fill="#9A9A9A"/><rect x="619" y="471" width="1" height="1" fill="#000"/><rect x="604" y="472" width="1" height="1" fill="#9A9A9A"/><rect x="605" y="472" width="1" height="1" fill="#fff"/><rect x="606" y="472" width="9" height="1" fill="#D0D0D0"/><rect x="615" y="472" width="1" height="1" fill="#000"/><rect x="616" y="472" width="2" height="1" fill="#D0D0D0"/><rect x="618" y="472" width="1" height="1" fill="#9A9A9A"/><rect x="619" y="472" width="1" height="1" fill="#000"/><rect x="604" y="473" width="1" height="1" fill="#9A9A9A"/><rect x="605" y="473" width="1" height="1" fill="#fff"/><rect x="606" y="473" width="12" height="1" fill="#D0D0D0"/><rect x="618" y="473" width="1" height="1" fill="#9A9A9A"/><rect x="619" y="473" width="1" height="1" fill="#000"/><rect x="604" y="474" width="1" height="1" fill="#9A9A9A"/><rect x="605" y="474" width="1" height="1" fill="#fff"/><rect x="606" y="474" width="10" height="1" fill="#8A8A8A"/><rect x="616" y="474" width="1" height="1" fill="#fff"/><rect x="617" y="474" width="1" height="1" fill="#D0D0D0"/><rect x="618" y="474" width="1" height="1" fill="#9A9A9A"/><rect x="619" y="474" width="1" height="1" fill="#000"/><rect x="604" y="475" width="1" height="1" fill="#9A9A9A"/><rect x="605" y="475" width="12" height="1" fill="#fff"/><rect x="617" y="475" width="1" height="1" fill="#D0D0D0"/><rect x="618" y="475" width="1" height="1" fill="#9A9A9A"/><rect x="619" y="475" width="1" height="1" fill="#000"/><rect x="604" y="476" width="15" height="1" fill="#9A9A9A"/><rect x="619" y="476" width="1" height="1" fill="#000"/><rect x="605" y="477" width="14" height="1" fill="#000"/>
 <!-- spinner arrows -->
 <g fill="#000">
  <path d="M483 527 H488 L485.5 524.5 Z" shape-rendering="auto"/>
  <path d="M483 535 H488 L485.5 537.5 Z" shape-rendering="auto"/>
  <path d="M483 551 H488 L485.5 548.5 Z" shape-rendering="auto"/>
  <path d="M483 559 H488 L485.5 561.5 Z" shape-rendering="auto"/>
 </g>
</svg>
<div class="t" style="left:250px;top:586px">Record Comment:</div>
<div class="sunk" style="left:246px;top:600px;width:525px;height:52px;background:#D6D5CD"></div>
<div class="t" style="left:249px;top:605px;letter-spacing:-0.1px">Wave Audio File comment not available.</div>
<div class="a" style="left:752px;top:602px;width:17px;height:48px;background:#FFFFFF"></div>
<div class="a" style="left:752px;top:618px;width:6px;height:17px;background:#F4F2EC"></div>
<div class="a" style="left:753px;top:603px;width:15px;height:15px;border-radius:2px;background:#F4F0E8;border:1px solid #fff;box-shadow:1px 1px 0 #E4E2EA"></div>
<div class="a" style="left:753px;top:635px;width:15px;height:15px;border-radius:2px;background:#F4F0E8;border:1px solid #fff;box-shadow:1px 1px 0 #E4E2EA"></div>
<svg class="a" style="left:752px;top:602px" width="17" height="48"><path d="M5 10.5 L8.5 7 L12 10.5" fill="none" stroke="#C4C3CC" stroke-width="2"/><path d="M5 39 L8.5 42.5 L12 39" fill="none" stroke="#C4C3CC" stroke-width="2"/></svg>

<!-- dialog title -->
<svg class="a" style="left:242px;top:205px" width="12" height="11" shape-rendering="crispEdges"><rect x="0" y="0" width="3" height="1" fill="#000"/><rect x="0" y="1" width="1" height="1" fill="#000"/><rect x="1" y="1" width="2" height="1" fill="#00E0E0"/><rect x="3" y="1" width="4" height="1" fill="#000"/><rect x="0" y="2" width="1" height="1" fill="#000"/><rect x="1" y="2" width="2" height="1" fill="#fff"/><rect x="3" y="2" width="4" height="1" fill="#00E0E0"/><rect x="7" y="2" width="3" height="1" fill="#000"/><rect x="0" y="3" width="1" height="1" fill="#000"/><rect x="1" y="3" width="6" height="1" fill="#fff"/><rect x="7" y="3" width="2" height="1" fill="#00E0E0"/><rect x="9" y="3" width="1" height="1" fill="#000"/><rect x="0" y="4" width="1" height="1" fill="#000"/><rect x="1" y="4" width="8" height="1" fill="#fff"/><rect x="9" y="4" width="1" height="1" fill="#000"/><rect x="0" y="5" width="1" height="1" fill="#000"/><rect x="1" y="5" width="8" height="1" fill="#fff"/><rect x="9" y="5" width="1" height="1" fill="#000"/><rect x="0" y="6" width="1" height="1" fill="#000"/><rect x="1" y="6" width="8" height="1" fill="#fff"/><rect x="9" y="6" width="1" height="1" fill="#000"/><rect x="0" y="7" width="1" height="1" fill="#000"/><rect x="1" y="7" width="8" height="1" fill="#fff"/><rect x="9" y="7" width="1" height="1" fill="#000"/><rect x="10" y="7" width="1" height="1" fill="#9C9080"/><rect x="0" y="8" width="3" height="1" fill="#000"/><rect x="3" y="8" width="6" height="1" fill="#fff"/><rect x="9" y="8" width="1" height="1" fill="#000"/><rect x="10" y="8" width="2" height="1" fill="#9C9080"/><rect x="3" y="9" width="4" height="1" fill="#000"/><rect x="7" y="9" width="2" height="1" fill="#fff"/><rect x="9" y="9" width="1" height="1" fill="#000"/><rect x="7" y="10" width="3" height="1" fill="#000"/></svg>
<div class="tb" style="left:259px;top:205px;color:#0A1E84;font-size:14px;line-height:14px;letter-spacing:-0.3px">Node Properties (0000 -&nbsp; Entry Level)</div>
<div class="tb" style="left:258px;top:204px;color:#fff;font-size:14px;line-height:14px;letter-spacing:-0.3px">Node Properties (0000 -&nbsp; Entry Level)</div>
<div class="a" style="left:759px;top:200px;width:21px;height:21px;border-radius:3px;border:1px solid #fff;background:linear-gradient(160deg,#E8785A,#D44A20 60%,#C2401A)"></div>
<svg class="a" style="left:759px;top:200px" width="21" height="21"><path d="M6 6 L15 15 M15 6 L6 15" stroke="#fff" stroke-width="2"/></svg>

<!-- dialog toolbar icons -->
<svg class="a" style="left:0;top:0" width="330" height="300" shape-rendering="crispEdges">
 <defs>
  <pattern id="dr" width="2" height="2" patternUnits="userSpaceOnUse"><rect width="2" height="2" fill="#FF0000"/><rect width="1" height="1" fill="#9020B0"/></pattern>
 </defs>
 <!-- notebook -->
 <rect x="250" y="260" width="19" height="17" fill="#fff"/>
 <rect x="269" y="266" width="1" height="12" fill="#000"/>
 <rect x="245" y="277" width="25" height="1" fill="#000"/>
 <g fill="#9A9A9A"><rect x="251" y="268" width="6" height="1"/><rect x="251" y="270" width="8" height="1"/><rect x="251" y="272" width="10" height="1"/><rect x="254" y="274" width="8" height="1"/></g>
 <path d="M244 261 L250 255 V272 L244 278 Z" fill="url(#dr)"/>
 <path d="M243.5 261.5 L250.5 254.5 V272.5" fill="none" stroke="#000" stroke-width="1"/>
 <g fill="#000"><rect x="242" y="261" width="2" height="2"/><rect x="242" y="264" width="2" height="2"/><rect x="242" y="267" width="2" height="2"/><rect x="242" y="270" width="2" height="2"/><rect x="242" y="273" width="2" height="2"/><rect x="242" y="276" width="2" height="2"/></g>
 <rect x="243" y="278" width="2" height="2" fill="#8B4513"/>
 <path d="M256 263 L259.5 258.5 L262 257.5 H265 L267.5 259 H270.5 L272 262 V265 L270 266.5 H257.5 L256 265.5 Z" fill="#FFFF00" stroke="#000" stroke-width="1" shape-rendering="auto"/>
 <path d="M269 260 H273 V265 L270.5 268 H267.5 V266 Z" fill="#FF00FF" stroke="#000" stroke-width="0.9" shape-rendering="auto"/>
 <path d="M269.5 250.5 L254 266" stroke="#000" stroke-width="2.6" shape-rendering="auto"/>
 <path d="M269.5 250.5 L254 266" stroke="#FF00FF" stroke-width="1" stroke-dasharray="1.2 0.6" shape-rendering="auto"/>
 <rect x="253" y="265" width="2" height="2" fill="#000"/>
</svg>
<svg class="a" style="left:278px;top:246px" width="40" height="40" viewBox="126 48 40 40">
 <use href="#spk"/>
</svg>


<!-- tooltip -->
<div class="a" style="left:246px;top:277px;width:39px;height:17px;background:#FFFFE1;border:1px solid #000"></div>
<div class="t" style="left:249px;top:281px;letter-spacing:-0.3px">Accept</div>

<!-- watermark -->
<svg class="a" style="left:0;top:0;pointer-events:none" width="1024" height="737">
 <g opacity="0.11" font-family="Liberation Sans" font-size="72" transform="translate(0 395) scale(1 1.04) translate(0 -395)">
  <g fill="#FF0000" stroke="#FF0000" stroke-width="2.2"><text x="269" y="446">Sharya</text><text x="519" y="446">SI2000</text></g>
  <g fill="#0000FF"><text x="269" y="446">Sharya</text><text x="519" y="446">SI2000</text></g>
 </g>
</svg>
</body></html>
